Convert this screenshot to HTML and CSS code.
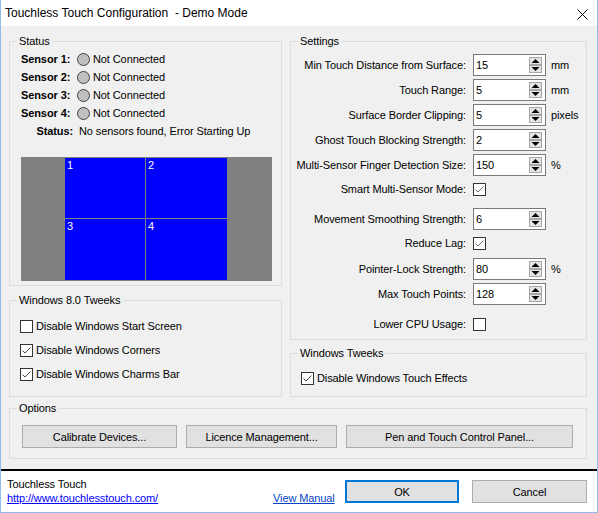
FILE: index.html
```html
<!DOCTYPE html>
<html>
<head>
  <title>Touchless Touch Configuration</title>
  <link rel="stylesheet" href="styles.css">
</head>
<body>
  <svg class="defs" width="0" height="0">
    <symbol id="spinner" viewBox="0 0 13 16">
      <rect x="0.5" y="0.5" width="12" height="7" fill="#e5e5e5" stroke="#a6a6a6"/>
      <rect x="0.5" y="8.5" width="12" height="7" fill="#e5e5e5" stroke="#a6a6a6"/>
      <path d="M2.5 6h8L6.5 2z" fill="#000"/>
      <path d="M2.5 10h8L6.5 14z" fill="#000"/>
    </symbol>
    <symbol id="tick" viewBox="0 0 11 11">
      <path d="M1.5 5.5L4 8L9.5 2.5" fill="none" stroke="currentColor" stroke-width="1"/>
    </symbol>
  </svg>

  <div class="window">
    <div class="titlebar">
      <span class="title">Touchless Touch Configuration  - Demo Mode</span>
      <svg class="close" width="11" height="11" viewBox="0 0 11 11">
        <path d="M0.5 0.5L10.5 10.5M10.5 0.5L0.5 10.5" stroke="#000" stroke-width="1"/>
      </svg>
    </div>

    <div class="content">
      <div class="columns">
        <div class="col-left">
          <fieldset class="group status-group">
            <legend>Status</legend>
            <div class="sensors">
              <div class="sensor-row"><span class="sensor-name">Sensor 1:</span><span class="led"></span><span>Not Connected</span></div>
              <div class="sensor-row"><span class="sensor-name">Sensor 2:</span><span class="led"></span><span>Not Connected</span></div>
              <div class="sensor-row"><span class="sensor-name">Sensor 3:</span><span class="led"></span><span>Not Connected</span></div>
              <div class="sensor-row"><span class="sensor-name">Sensor 4:</span><span class="led"></span><span>Not Connected</span></div>
              <div class="sensor-row"><span class="status-name">Status:</span><span>No sensors found, Error Starting Up</span></div>
            </div>
            <div class="screen">
              <div class="screen-grid">
                <div class="zone">1</div>
                <div class="zone">2</div>
                <div class="zone">3</div>
                <div class="zone">4</div>
              </div>
            </div>
          </fieldset>

          <fieldset class="group tweaks8-group">
            <legend>Windows 8.0 Tweeks</legend>
            <div class="check-list">
              <div class="check-row"><span class="checkbox"></span>Disable Windows Start Screen</div>
              <div class="check-row"><span class="checkbox checked"><svg width="11" height="11"><use href="#tick"/></svg></span>Disable Windows Corners</div>
              <div class="check-row"><span class="checkbox checked"><svg width="11" height="11"><use href="#tick"/></svg></span>Disable Windows Charms Bar</div>
            </div>
          </fieldset>
        </div>

        <div class="col-right">
          <fieldset class="group settings-group">
            <legend>Settings</legend>
            <div class="settings-grid">
              <div class="setting">
                <span class="setting-label">Min Touch Distance from Surface:</span>
                <span class="spin"><span>15</span><svg width="13" height="16"><use href="#spinner"/></svg></span>
                <span class="unit">mm</span>
              </div>
              <div class="setting">
                <span class="setting-label">Touch Range:</span>
                <span class="spin"><span>5</span><svg width="13" height="16"><use href="#spinner"/></svg></span>
                <span class="unit">mm</span>
              </div>
              <div class="setting">
                <span class="setting-label">Surface Border Clipping:</span>
                <span class="spin"><span>5</span><svg width="13" height="16"><use href="#spinner"/></svg></span>
                <span class="unit">pixels</span>
              </div>
              <div class="setting">
                <span class="setting-label">Ghost Touch Blocking Strength:</span>
                <span class="spin"><span>2</span><svg width="13" height="16"><use href="#spinner"/></svg></span>
              </div>
              <div class="setting">
                <span class="setting-label">Multi-Sensor Finger Detection Size:</span>
                <span class="spin"><span>150</span><svg width="13" height="16"><use href="#spinner"/></svg></span>
                <span class="unit">%</span>
              </div>
              <div class="setting">
                <span class="setting-label">Smart Multi-Sensor Mode:</span>
                <span class="checkbox checked light"><svg width="11" height="11"><use href="#tick"/></svg></span>
              </div>
              <div class="setting">
                <span class="setting-label">Movement Smoothing Strength:</span>
                <span class="spin"><span>6</span><svg width="13" height="16"><use href="#spinner"/></svg></span>
              </div>
              <div class="setting">
                <span class="setting-label">Reduce Lag:</span>
                <span class="checkbox checked light"><svg width="11" height="11"><use href="#tick"/></svg></span>
              </div>
              <div class="setting">
                <span class="setting-label">Pointer-Lock Strength:</span>
                <span class="spin"><span>80</span><svg width="13" height="16"><use href="#spinner"/></svg></span>
                <span class="unit">%</span>
              </div>
              <div class="setting">
                <span class="setting-label">Max Touch Points:</span>
                <span class="spin"><span>128</span><svg width="13" height="16"><use href="#spinner"/></svg></span>
              </div>
              <div class="setting">
                <span class="setting-label">Lower CPU Usage:</span>
                <span class="checkbox"></span>
              </div>
            </div>
          </fieldset>

          <fieldset class="group tweaks-group">
            <legend>Windows Tweeks</legend>
            <div class="check-list">
              <div class="check-row"><span class="checkbox checked"><svg width="11" height="11"><use href="#tick"/></svg></span>Disable Windows Touch Effects</div>
            </div>
          </fieldset>
        </div>
      </div>

      <fieldset class="group options-group">
        <legend>Options</legend>
        <div class="options-row">
          <button class="btn btn-calibrate">Calibrate Devices...</button>
          <button class="btn btn-licence">Licence Management...</button>
          <button class="btn btn-pen">Pen and Touch Control Panel...</button>
        </div>
      </fieldset>
    </div>

    <div class="footer">
      <div class="footer-info">
        <div>Touchless Touch</div>
        <a class="link" href="#">http://www.touchlesstouch.com/</a>
      </div>
      <div class="manual"><a class="link manual-link" href="#">View Manual</a></div>
      <button class="btn btn-ok">OK</button>
      <button class="btn btn-cancel">Cancel</button>
    </div>
  </div>
</body>
</html>
```

FILE: styles.css
```css
body {
  margin: 0;
  font-family: "Liberation Sans", Arial, sans-serif;
  font-size: 11px;
  letter-spacing: -0.1px;
  color: #000000;
}

.defs {
  position: absolute;
  width: 0;
  height: 0;
}

.window {
  width: 598px;
  height: 513px;
  box-sizing: border-box;
  border: 1px solid #8fbce9; /* light blue frame */
  border-top: none;
  display: flex;
  flex-direction: column;
}

.titlebar {
  height: 26px;
  flex-shrink: 0;
  background-color: #FFFFFF;
  display: flex;
  justify-content: space-between;
  align-items: flex-start;
  padding-left: 4px;
}

.title {
  font-size: 12px;
  line-height: 14px;
  letter-spacing: 0;
  margin-top: 6px;
  white-space: pre;
}

.close {
  margin: 9px 9px 0 0;
}

.content {
  height: 443px;
  flex-shrink: 0;
  box-sizing: border-box;
  background-color: #F0F0F0;
  padding: 9px 10px 0 8px;
}

.columns {
  display: flex;
  gap: 8px;
}

.col-left {
  width: 273px;
  display: flex;
  flex-direction: column;
}

.col-right {
  width: 297px;
  display: flex;
  flex-direction: column;
}

.group {
  margin: 0;
  padding: 0;
  min-width: 0;
  box-sizing: border-box;
  border: 1px solid #DCDCDC;
}

.group legend {
  margin-left: 7px;
  padding: 0 2px;
  line-height: 13px;
}

/* status */
.status-group {
  height: 251px;
}

.sensors {
  padding: 2px 0 0 11px;
}

.sensor-row {
  display: flex;
  align-items: center;
  height: 18px;
}

.sensor-name {
  width: 56px;
  font-weight: bold;
}

.status-name {
  width: 52px;
  margin-right: 6px;
  text-align: right;
  font-weight: bold;
}

.led {
  width: 13px;
  height: 13px;
  box-sizing: border-box;
  border: 1px solid #404040;
  border-radius: 50%;
  background-color: #C0C0C0;
  margin-right: 3px;
}

.screen {
  width: 251px;
  height: 124px;
  box-sizing: border-box;
  margin: 17px 0 0 11px;
  padding: 1px 0 0 44px;
  background-color: #808080;
}

.screen-grid {
  display: grid;
  grid-template-columns: 80px 81px;
  grid-template-rows: 60px 61px;
  gap: 1px;
}

.zone {
  background-color: #0000FF;
  color: #FFFFFF;
  line-height: 13px;
  padding: 1px 0 0 2px;
}

/* check boxes */
.tweaks8-group {
  margin-top: 8px;
  height: 103px;
}

.check-list {
  padding: 7px 0 0 10px;
}

.check-row {
  display: flex;
  align-items: center;
  height: 24px;
}

.checkbox {
  width: 13px;
  height: 13px;
  box-sizing: border-box;
  border: 1px solid #333333;
  background-color: #FFFFFF;
  margin-right: 3px;
  display: flex;
  color: #4a4a4a;
}

.checkbox.light {
  color: #6e6e6e;
}

/* settings */
.settings-group {
  height: 305px;
}

.settings-grid {
  display: grid;
  grid-template-rows: 25px 25px 25px 25px 24px 30px 24px 26px 25px 30px 22px;
  padding-top: 6px;
}

.setting {
  display: flex;
  align-items: center;
  height: 22px;
}

.setting-label {
  width: 175px;
  margin-right: 7px;
  text-align: right;
}

.spin {
  width: 73px;
  height: 22px;
  box-sizing: border-box;
  border: 1px solid #7A7A7A;
  background-color: #FFFFFF;
  display: flex;
  align-items: center;
  justify-content: space-between;
  padding: 0 3px 0 2px;
}

.unit {
  margin-left: 5px;
}

.tweaks-group {
  margin-top: 7px;
  height: 50px;
}

.tweaks-group .check-list {
  padding-top: 6px;
}

/* options */
.options-group {
  margin-top: 5px;
  height: 57px;
}

.options-row {
  display: flex;
  gap: 9px;
  padding: 10px 0 0 12px;
}

.btn {
  height: 23px;
  padding: 0;
  font-family: inherit;
  font-size: 11px;
  letter-spacing: inherit;
  color: #000000;
  background-color: #E1E1E1;
  border: 1px solid #ADADAD;
}

.btn-calibrate {
  width: 155px;
}

.btn-licence {
  width: 151px;
}

.btn-pen {
  width: 227px;
}

/* footer */
.footer {
  flex: 1;
  display: flex;
  align-items: flex-start;
  border-top: 2px solid #000000;
  background-color: #FFFFFF;
  padding: 6px 0 0 6px;
}

.footer-info {
  width: 266px;
  line-height: 14px;
  display: flex;
  flex-direction: column;
  align-items: flex-start;
}

.manual {
  width: 72px;
  line-height: 14px;
  margin-top: 14px;
}

.link {
  color: #0000FF;
}

.manual-link {
  color: #0645C8;
}

.btn-ok {
  width: 114px;
  margin: 3px 13px 0 0;
  border: 2px solid #0078D7;
}

.btn-cancel {
  width: 115px;
  margin-top: 3px;
}
```
